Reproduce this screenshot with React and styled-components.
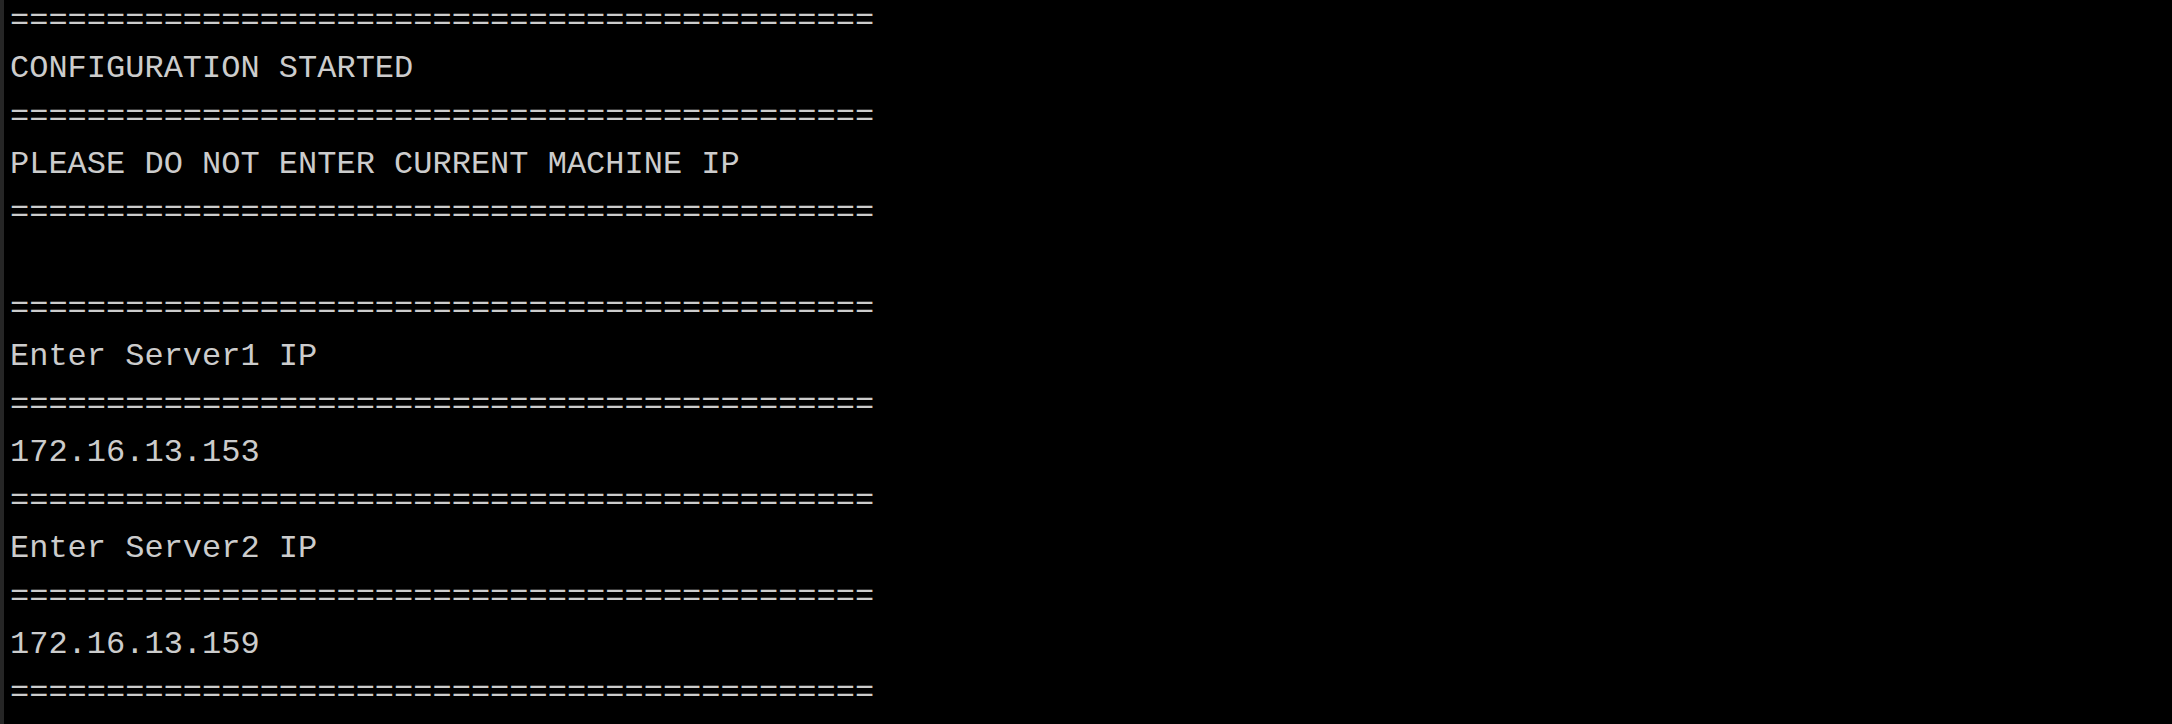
import React from 'react'
import styled, { createGlobalStyle } from 'styled-components'

const GlobalStyle = createGlobalStyle`
  html, body {
    margin: 0;
    padding: 0;
    background: #000000;
  }
  body {
    overflow: hidden;
  }
`

const RULE = '='.repeat(45)

const lines = [
    RULE,
    'CONFIGURATION STARTED',
    RULE,
    'PLEASE DO NOT ENTER CURRENT MACHINE IP',
    RULE,
    '',
    RULE,
    'Enter Server1 IP',
    RULE,
    '172.16.13.153',
    RULE,
    'Enter Server2 IP',
    RULE,
    '172.16.13.159',
    RULE,
]

const Console = () => {
    return (
        <Window>
            <GlobalStyle />
            <Output>
                {lines.map((text, i) => (
                    <Line key={i}>{text || '\u00a0'}</Line>
                ))}
            </Output>
        </Window>
    )
}

const Window = styled.div`
    display: flex;
    width: 2172px;
    height: 724px;
    background: #000000;
    border-left: 4px solid #262626;
    box-sizing: border-box;
    overflow: hidden;
`

const Output = styled.div`
    display: flex;
    flex-direction: column;
    margin-top: -3px;
    padding-left: 6px;
`

const Line = styled.div`
    font-family: "Liberation Mono", "DejaVu Sans Mono", monospace;
    font-size: 32px;
    line-height: 48px;
    height: 48px;
    color: #cccccc;
    white-space: pre;
`

export default Console
